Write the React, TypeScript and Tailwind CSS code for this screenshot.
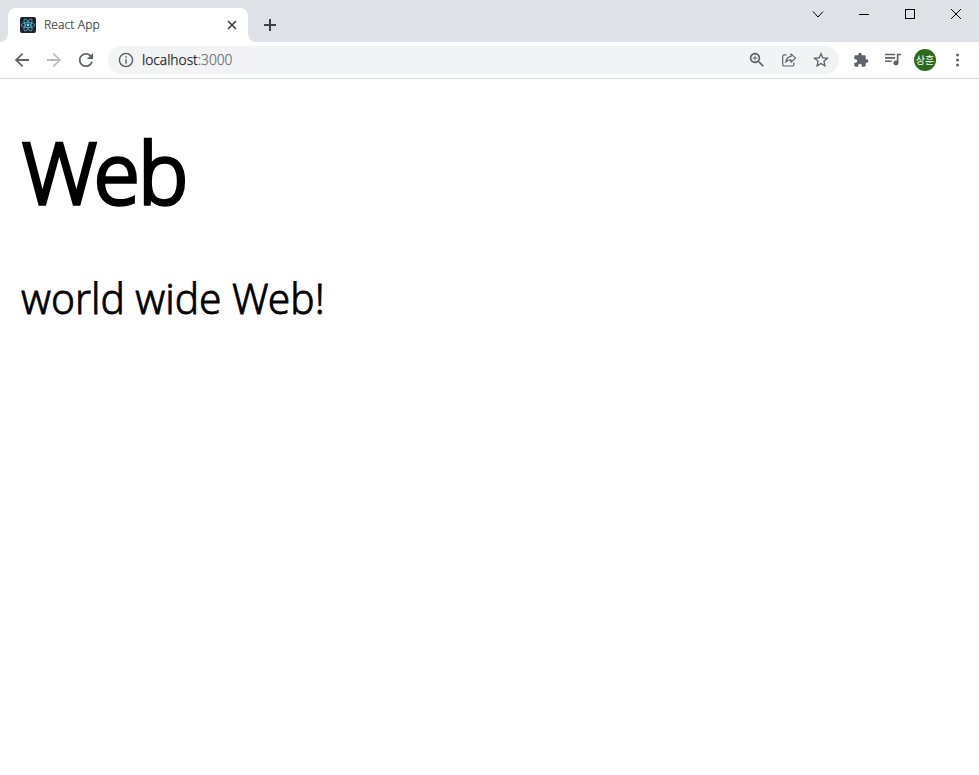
import React from 'react';

type IconProps = { d: string; className?: string; box?: string };

function Icon({ d, className = '', box = '0 0 24 24' }: IconProps) {
  return (
    <svg viewBox={box} fill="currentColor" className={`shrink-0 ${className}`}>
      <path d={d} />
    </svg>
  );
}

const paths = {
  back: 'M20 11H7.83l5.59-5.59L12 4l-8 8 8 8 1.41-1.41L7.83 13H20v-2z',
  forward: 'M12 4l-1.41 1.41L16.17 11H4v2h12.17l-5.58 5.59L12 20l8-8z',
  reload:
    'M17.65 6.35C16.2 4.9 14.21 4 12 4c-4.42 0-7.99 3.58-7.99 8s3.57 8 7.99 8c3.73 0 6.84-2.55 7.73-6h-2.08c-.82 2.33-3.04 4-5.65 4-3.31 0-6-2.69-6-6s2.69-6 6-6c1.66 0 3.14.69 4.22 1.78L13 11h7V4l-2.35 2.35z',
  info: 'M11 7h2v2h-2zm0 4h2v6h-2zm1-9C6.48 2 2 6.48 2 12s4.48 10 10 10 10-4.48 10-10S17.52 2 12 2zm0 18c-4.41 0-8-3.59-8-8s3.59-8 8-8 8 3.59 8 8-3.59 8-8 8z',
  zoom: 'M15.5 14h-.79l-.28-.27C15.41 12.59 16 11.11 16 9.5 16 5.91 13.09 3 9.5 3S3 5.91 3 9.5 5.91 16 9.5 16c1.61 0 3.09-.59 4.23-1.57l.27.28v.79l5 4.99L20.49 19l-4.99-5zm-6 0C7.01 14 5 11.99 5 9.5S7.01 5 9.5 5 14 7.01 14 9.5 11.99 14 9.5 14zm.6-7.5H8.9v2.4H6.5v1.2h2.4v2.4h1.2v-2.4h2.4V8.9h-2.4z',
  star: 'M22 9.24l-7.19-.62L12 2 9.19 8.63 2 9.24l5.46 4.73L5.82 21 12 17.27 18.18 21l-1.63-7.03L22 9.24zM12 15.4l-3.76 2.27 1-4.28-3.32-2.88 4.38-.38L12 6.1l1.71 4.04 4.38.38-3.32 2.88 1 4.28L12 15.4z',
  puzzle:
    'M20.5 11H19V7c0-1.1-.9-2-2-2h-4V3.5C13 2.12 11.88 1 10.5 1S8 2.12 8 3.5V5H4c-1.1 0-1.99.9-1.99 2v3.8H3.5c1.49 0 2.7 1.21 2.7 2.7s-1.21 2.7-2.7 2.7H2V20c0 1.1.9 2 2 2h3.8v-1.5c0-1.49 1.21-2.7 2.7-2.7 1.49 0 2.7 1.21 2.7 2.7V22H17c1.1 0 2-.9 2-2v-4h1.5c1.38 0 2.5-1.12 2.5-2.5S21.88 11 20.5 11z',
  queue:
    'M15 6H3v2h12V6zm0 4H3v2h12v-2zM3 16h8v-2H3v2zM17 6v8.18c-.31-.11-.65-.18-1-.18-1.66 0-3 1.34-3 3s1.34 3 3 3 3-1.34 3-3V8h3V6h-5z',
};

function ReactFavicon() {
  return (
    <svg viewBox="0 0 16 16" className="size-4 shrink-0">
      <rect width="16" height="16" rx="2" fill="#20232a" />
      <g fill="none" stroke="#4fb6d3" strokeWidth="0.8">
        <ellipse cx="8" cy="8" rx="6.7" ry="2.6" />
        <ellipse cx="8" cy="8" rx="6.7" ry="2.6" transform="rotate(60 8 8)" />
        <ellipse cx="8" cy="8" rx="6.7" ry="2.6" transform="rotate(120 8 8)" />
      </g>
      <circle cx="8" cy="8" r="1.4" fill="#61dafb" />
    </svg>
  );
}

function WindowControls() {
  return (
    <div className="ml-auto flex h-7 text-black">
      <div className="flex w-[46px] items-center justify-center">
        <svg viewBox="0 0 12 12" className="size-3" fill="none" stroke="currentColor">
          <path d="M1 3.5l5 5.5 5-5.5" />
        </svg>
      </div>
      <div className="flex w-[46px] items-center justify-center">
        <svg viewBox="0 0 10 10" className="size-2.5" fill="none" stroke="currentColor">
          <path d="M0 5.5h10" />
        </svg>
      </div>
      <div className="flex w-[46px] items-center justify-center">
        <div className="size-2.5 border border-black" />
      </div>
      <div className="flex w-[46px] items-center justify-center">
        <svg viewBox="0 0 10 10" className="size-2.5" fill="none" stroke="currentColor">
          <path d="M0 0l10 10M10 0L0 10" />
        </svg>
      </div>
    </div>
  );
}

function TabStrip() {
  return (
    <div className="flex h-[42px] bg-[#dee1e6]">
      <svg viewBox="0 0 8 8" className="size-2 shrink-0 self-end" fill="#fff">
        <path d="M0 8a8 8 0 0 0 8-8v8z" />
      </svg>
      <div className="mt-2 flex h-[34px] w-60 items-center rounded-t-lg bg-white pl-3 pr-[11px]">
        <ReactFavicon />
        <span className="ml-2 text-[12px] font-light leading-4 tracking-[0.1px] text-[#3c4043] [-webkit-text-stroke:0.2px]">
          React App
        </span>
        <svg viewBox="0 0 10 10" className="ml-auto size-2.5" fill="none" stroke="#3c4043" strokeWidth="1.7">
          <path d="M1 1l8 8M9 1L1 9" />
        </svg>
      </div>
      <svg viewBox="0 0 8 8" className="size-2 shrink-0 self-end" fill="#fff">
        <path d="M8 8a8 8 0 0 1-8-8v8z" />
      </svg>
      <svg viewBox="0 0 12 12" className="ml-2 mt-[19px] size-3" stroke="#3c4043" strokeWidth="2">
        <path d="M6 0v12M0 6h12" />
      </svg>
      <WindowControls />
    </div>
  );
}

function Toolbar() {
  return (
    <div className="flex h-[37px] items-center border-b border-[#d9dbde] bg-white text-[#5f6368]">
      <Icon d={paths.back} box="3 3 18 18" className="ml-3.5 size-4" />
      <Icon d={paths.forward} box="3 3 18 18" className="ml-4 size-4 text-[#babcbe]" />
      <Icon d={paths.reload} box="3 3 18 18" className="ml-4 size-4" />
      <div className="ml-3.5 flex h-7 w-[731px] items-center rounded-full bg-[#f1f3f4] px-2.5">
        <Icon d={paths.info} box="1 1 22 22" className="size-4" />
        <span className="ml-2 inline-block origin-left scale-x-[0.98] text-[14px] font-light leading-5 text-[#202124] [-webkit-text-stroke:0.25px]">
          localhost<span className="text-[#6f7377]">:3000</span>
        </span>
        <Icon d={paths.zoom} box="2 2 20 20" className="ml-auto size-4" />
        <svg viewBox="0 0 16 16" className="ml-4 size-4" fill="none" stroke="currentColor" strokeWidth="1.2" strokeLinejoin="round">
          <path d="M5.5 2.8H3.3a1.6 1.6 0 0 0-1.6 1.6v8a1.6 1.6 0 0 0 1.6 1.6h8a1.6 1.6 0 0 0 1.6-1.6v-1.9" />
          <path d="M10 1.9l4.6 4.2L10 10.2V7.9c-2.6-.1-4.2.8-5.2 2.4.3-3.2 2-5.4 5.2-5.9z" />
        </svg>
        <Icon d={paths.star} box="2 2 20 20" className="ml-4 size-4" />
      </div>
      <Icon d={paths.puzzle} className="ml-3.5 size-4" />
      <Icon d={paths.queue} box="3 4 19 19" className="ml-4 size-4" />
      <div className="ml-[13px] flex size-[22px] items-center justify-center rounded-full bg-[#2f6a1c] font-['Noto_Sans_CJK_KR',sans-serif] text-[10px] leading-none text-white">
        상훈
      </div>
      <svg viewBox="0 0 4 14" className="ml-[19px] h-3.5 w-1" fill="currentColor">
        <circle cx="2.5" cy="2" r="1.5" />
        <circle cx="2.5" cy="7" r="1.5" />
        <circle cx="2.5" cy="12" r="1.5" />
      </svg>
    </div>
  );
}

export default function App() {
  return (
    <div className="h-[775px] w-[979px] overflow-hidden bg-white font-['Noto_Sans','Noto_Sans_CJK_KR',sans-serif]">
      <TabStrip />
      <Toolbar />
      <main className="px-[21px] pt-8 text-black">
        <h1 className="ml-px origin-left scale-x-[0.98] text-[85px] font-light leading-[120px] tracking-[-1.5px] [-webkit-text-stroke:3.4px_black]">
          Web
        </h1>
        <p className="mt-[39px] origin-left scale-x-[0.968] text-[42px] font-light leading-[56px] [-webkit-text-stroke:0.8px_black]">
          world wide Web!
        </p>
      </main>
    </div>
  );
}
